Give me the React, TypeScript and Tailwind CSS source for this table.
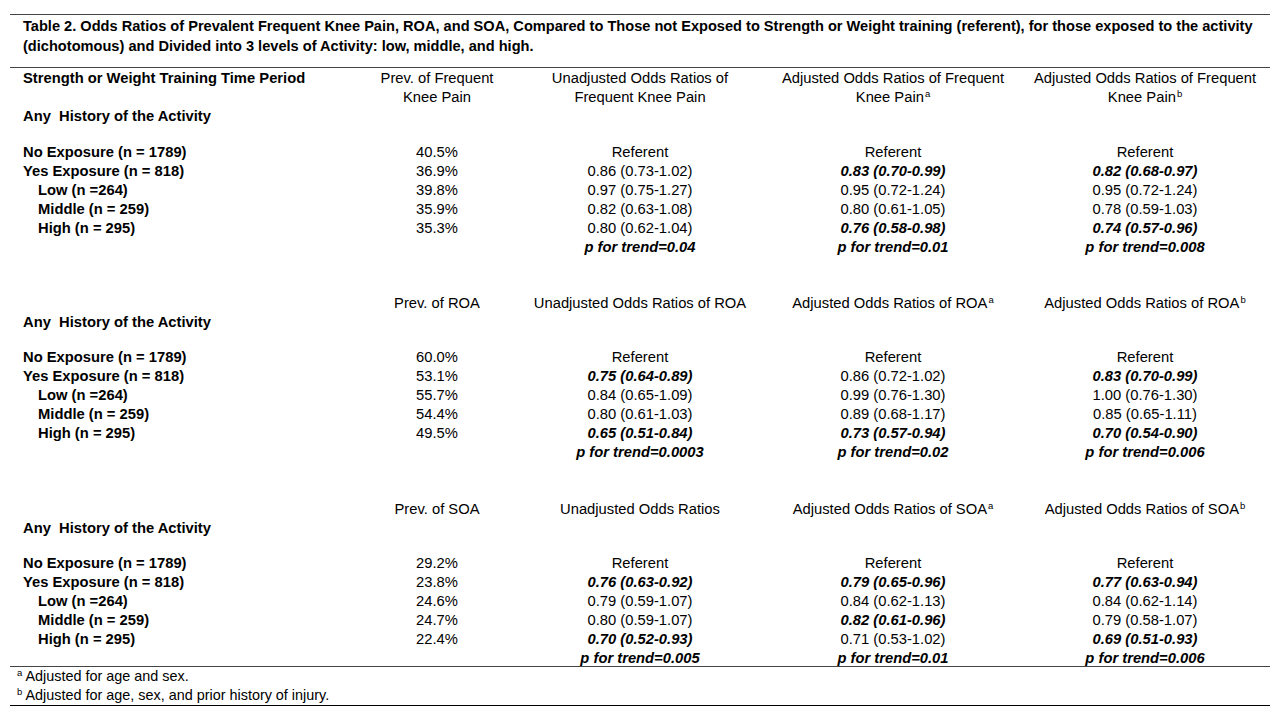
import React from "react";

type Row = { label: string; indent: boolean; prev: string; c: string[] };

const Sup = ({ t }: { t: string }) => (
  <span className="relative top-[-5px] ml-px text-[9.5px] leading-none">{t}</span>
);

const Cell = ({ v }: { v: string }) => {
  const bi = v.startsWith("*");
  const txt = bi ? v.slice(1) : v;
  return (
    <div className={"text-center whitespace-nowrap " + (bi ? "font-bold italic" : "")}>{txt}</div>
  );
};

const Section = ({
  header,
  rows,
  trend,
  first,
  last,
}: {
  header: React.ReactNode[][];
  rows: Row[];
  trend: string[];
  first?: boolean;
  last?: boolean;
}) => (
  <div className={"flex flex-col " + (first ? "pt-px" : "")}>
    <div className="grid grid-cols-[350px_154px_252px_254px_250px]">
      <div className="pl-[13px] font-bold whitespace-nowrap">
        {first ? "Strength or Weight Training Time Period" : ""}
      </div>
      {header.map((h, i) => (
        <div key={i} className="flex flex-col items-center whitespace-nowrap">
          {h.map((line, j) => (
            <div key={j}>{line}</div>
          ))}
        </div>
      ))}
    </div>
    <div className="pl-[13px] font-bold whitespace-nowrap">Any{"\u00a0"} History of the Activity</div>
    <div className={first ? "h-[17px]" : "h-4"} />
    {rows.map((r, i) => (
      <div key={i} className="grid grid-cols-[350px_154px_252px_254px_250px]">
        <div className={"font-bold whitespace-nowrap " + (r.indent ? "pl-[28px]" : "pl-[13px]")}>{r.label}</div>
        <Cell v={r.prev} />
        {r.c.map((v, j) => (
          <Cell key={j} v={v} />
        ))}
      </div>
    ))}
    <div className={"grid grid-cols-[350px_154px_252px_254px_250px] " + (last ? "h-[17px]" : "")}>
      <div />
      <div />
      {trend.map((t, j) => (
        <div key={j} className="text-center font-bold italic whitespace-nowrap">
          p for trend={t}
        </div>
      ))}
    </div>
  </div>
);

const labels = [
  ["No Exposure (n = 1789)", false],
  ["Yes Exposure (n = 818)", false],
  ["Low (n =264)", true],
  ["Middle (n = 259)", true],
  ["High (n = 295)", true],
] as const;

const mk = (prev: string[], c: string[][]): Row[] =>
  labels.map((l, i) => ({ label: l[0], indent: l[1], prev: prev[i], c: c[i] }));

const s1 = mk(
  ["40.5%", "36.9%", "39.8%", "35.9%", "35.3%"],
  [
    ["Referent", "Referent", "Referent"],
    ["0.86 (0.73-1.02)", "*0.83 (0.70-0.99)", "*0.82 (0.68-0.97)"],
    ["0.97 (0.75-1.27)", "0.95 (0.72-1.24)", "0.95 (0.72-1.24)"],
    ["0.82 (0.63-1.08)", "0.80 (0.61-1.05)", "0.78 (0.59-1.03)"],
    ["0.80 (0.62-1.04)", "*0.76 (0.58-0.98)", "*0.74 (0.57-0.96)"],
  ]
);
const s2 = mk(
  ["60.0%", "53.1%", "55.7%", "54.4%", "49.5%"],
  [
    ["Referent", "Referent", "Referent"],
    ["*0.75 (0.64-0.89)", "0.86 (0.72-1.02)", "*0.83 (0.70-0.99)"],
    ["0.84 (0.65-1.09)", "0.99 (0.76-1.30)", "1.00 (0.76-1.30)"],
    ["0.80 (0.61-1.03)", "0.89 (0.68-1.17)", "0.85 (0.65-1.11)"],
    ["*0.65 (0.51-0.84)", "*0.73 (0.57-0.94)", "*0.70 (0.54-0.90)"],
  ]
);
const s3 = mk(
  ["29.2%", "23.8%", "24.6%", "24.7%", "22.4%"],
  [
    ["Referent", "Referent", "Referent"],
    ["*0.76 (0.63-0.92)", "*0.79 (0.65-0.96)", "*0.77 (0.63-0.94)"],
    ["0.79 (0.59-1.07)", "0.84 (0.62-1.13)", "0.84 (0.62-1.14)"],
    ["0.80 (0.59-1.07)", "*0.82 (0.61-0.96)", "0.79 (0.58-1.07)"],
    ["*0.70 (0.52-0.93)", "0.71 (0.53-1.02)", "*0.69 (0.51-0.93)"],
  ]
);

export default function App() {
  return (
    <div
      className="w-[1280px] h-[720px] bg-white text-black text-[14.75px] leading-[19px] overflow-hidden"
      style={{ fontFamily: '"Liberation Sans", Arial, sans-serif' }}
    >
      <div className="ml-[10px] w-[1260px] pt-[14px]">
        <div className="h-px bg-[#444]" />
        <div className="h-[52px] pl-[13px] pt-px text-[14.6px] font-bold leading-[20px]">
          <div className="whitespace-nowrap">
            Table 2. Odds Ratios of Prevalent Frequent Knee Pain, ROA, and SOA, Compared to Those not Exposed to Strength or Weight training (referent), for those exposed to the activity
          </div>
          <div className="whitespace-nowrap">(dichotomous) and Divided into 3 levels of Activity: low, middle, and high.</div>
        </div>
        <div className="h-px bg-[#444]" />
        <Section
          first
          header={[
            ["Prev. of Frequent", "Knee Pain"],
            ["Unadjusted Odds Ratios of", "Frequent Knee Pain"],
            ["Adjusted Odds Ratios of Frequent", <span key="a">Knee Pain<Sup t="a" /></span>],
            ["Adjusted Odds Ratios of Frequent", <span key="b">Knee Pain<Sup t="b" /></span>],
          ]}
          rows={s1}
          trend={["0.04", "0.01", "0.008"]}
        />
        <div className="h-[37px]" />
        <Section
          header={[
            ["Prev. of ROA"],
            ["Unadjusted Odds Ratios of ROA"],
            [<span key="a">Adjusted Odds Ratios of ROA<Sup t="a" /></span>],
            [<span key="b">Adjusted Odds Ratios of ROA<Sup t="b" /></span>],
          ]}
          rows={s2}
          trend={["0.0003", "0.02", "0.006"]}
        />
        <div className="h-[38px]" />
        <Section
          last
          header={[
            ["Prev. of SOA"],
            ["Unadjusted Odds Ratios"],
            [<span key="a">Adjusted Odds Ratios of SOA<Sup t="a" /></span>],
            [<span key="b">Adjusted Odds Ratios of SOA<Sup t="b" /></span>],
          ]}
          rows={s3}
          trend={["0.005", "0.01", "0.006"]}
        />
        <div className="h-px bg-[#444]" />
        <div className="pl-[6px] text-[14.4px]">
          <div>
            <Sup t="a" /> Adjusted for age and sex.
          </div>
          <div>
            <Sup t="b" /> Adjusted for age, sex, and prior history of injury.
          </div>
        </div>
        <div className="h-px bg-black" />
      </div>
    </div>
  );
}
